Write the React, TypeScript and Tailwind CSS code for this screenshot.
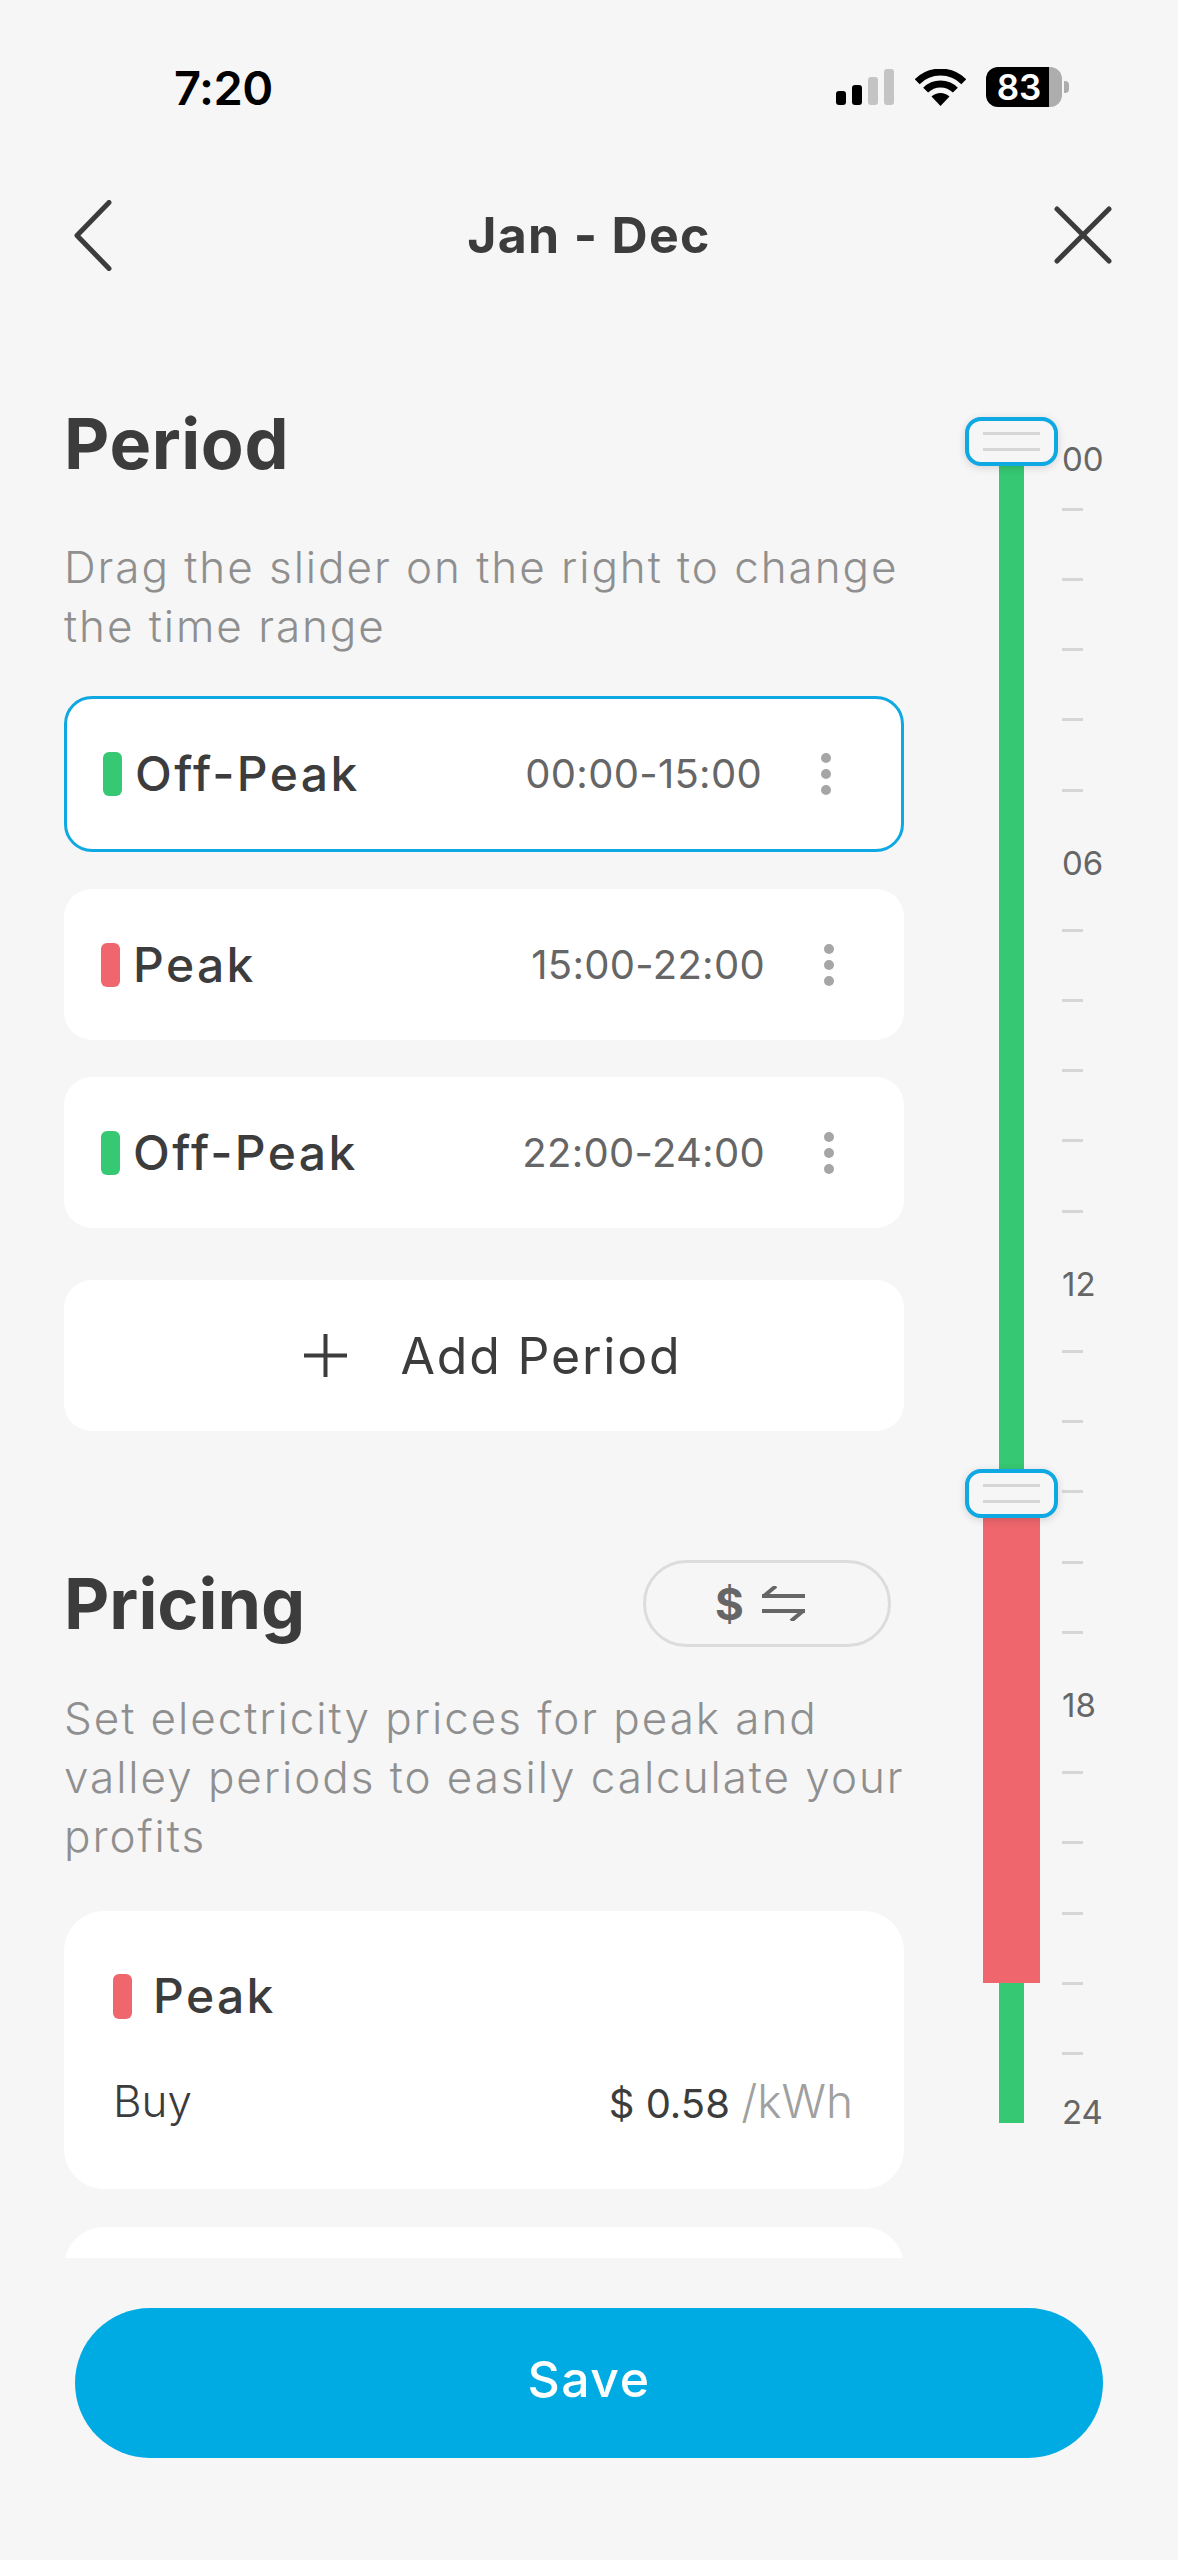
const ticks = Array.from({ length: 25 }, (_, hour) => hour);

const periods = [
  { name: "Off-Peak", range: "00:00-15:00", color: "bg-[#36c873]", active: true },
  { name: "Peak", range: "15:00-22:00", color: "bg-[#ef666d]", active: false },
  { name: "Off-Peak", range: "22:00-24:00", color: "bg-[#36c873]", active: false },
];

function StatusBar() {
  return (
    <div className="flex h-[174px] items-center justify-between pl-[174px] pr-[109px]">
      <span className="text-[47px] font-semibold leading-none tracking-[-0.5px] text-black">7:20</span>
      <div className="flex items-center">
        {/* Signal */}
        <div className="flex h-[36px] items-end gap-[6px]">
          <div className="h-[14px] w-[10px] rounded-[3px] bg-black" />
          <div className="h-[20px] w-[10px] rounded-[3px] bg-black" />
          <div className="h-[28px] w-[10px] rounded-[3px] bg-[#c4c4c4]" />
          <div className="h-[36px] w-[10px] rounded-[3px] bg-[#c4c4c4]" />
        </div>
        {/* Wifi */}
        <svg className="ml-[21px]" width="51" height="37" viewBox="0 0 51 37" fill="none">
          <path d="M2.2 12.7A33 33 0 0 1 48.8 12.7" stroke="#000" strokeWidth="7" />
          <path d="M10.65 21.15A21 21 0 0 1 40.35 21.15" stroke="#000" strokeWidth="7" />
          <path d="M25.5 37L16.5 27.5A13 13 0 0 1 34.5 27.5Z" fill="#000" />
        </svg>
        {/* Battery */}
        <div className="ml-[20px] flex h-[40px] w-[76px]">
          <div className="flex w-[63px] items-center justify-center rounded-l-[12px] bg-black pl-[3px] text-[35px] font-semibold leading-none text-white">
            83
          </div>
          <div className="w-[13px] rounded-r-[12px] bg-[#adadad]" />
        </div>
        <div className="ml-[2px] h-[12px] w-[5px] rounded-r-[4px] bg-[#adadad]" />
      </div>
    </div>
  );
}

function Header() {
  return (
    <div className="grid h-[122px] grid-cols-[1fr_auto_1fr] items-center px-[66px]">
      <svg className="ml-[8px]" width="38" height="71" viewBox="0 0 38 71" fill="none">
        <path d="M35 2.5L3 35.5L35 68.5" stroke="#3c3c3c" strokeWidth="5" strokeLinecap="round" strokeLinejoin="round" />
      </svg>
      <h1 className="text-[50px] font-bold leading-none tracking-[1.3px] text-[#3c3c3c]">Jan - Dec</h1>
      <svg className="justify-self-end" width="58" height="58" viewBox="0 0 58 58" fill="none">
        <path d="M3 3L55 55M55 3L3 55" stroke="#3c3c3c" strokeWidth="5" strokeLinecap="round" />
      </svg>
    </div>
  );
}

function PeriodRow({ name, range, color, active }: { name: string; range: string; color: string; active: boolean }) {
  return (
    <div
      className={`flex items-center rounded-[28px] bg-white pr-[70px] ${
        active ? "h-[156px] border-[3px] border-[#0ea8e2] pl-[36px]" : "h-[151px] pl-[37px]"
      }`}
    >
      <div className={`h-[44px] w-[19px] rounded-[6px] ${color}`} />
      <span className="ml-[13px] text-[48px] font-medium leading-none tracking-[2.4px] text-[#3c3c3c]">{name}</span>
      <span className="ml-auto text-[40px] leading-none tracking-[0.3px] text-[#666]">{range}</span>
      <div className="ml-[59px] flex flex-col gap-[6px]">
        <div className="size-[10px] rounded-full bg-[#a6a6a6]" />
        <div className="size-[10px] rounded-full bg-[#a6a6a6]" />
        <div className="size-[10px] rounded-full bg-[#a6a6a6]" />
      </div>
    </div>
  );
}

function Handle({ top }: { top: string }) {
  return (
    <div
      className={`absolute left-0 flex h-[49px] w-[93px] flex-col items-center justify-center gap-[13px] rounded-[16px] border-[4px] border-[#0ea8e2] bg-[#f6f6f6] shadow-[0_2px_8px_rgba(0,0,0,0.14)] ${top}`}
    >
      <div className="h-[3px] w-[57px] bg-[#d6d6d6]" />
      <div className="h-[3px] w-[57px] bg-[#d6d6d6]" />
    </div>
  );
}

function Slider() {
  return (
    <div className="ml-[61px] flex items-start pt-[108px]">
      <div className="relative mt-[35px] w-[93px]">
        <div className="flex flex-col items-center">
          <div className="h-[1053px] w-[25px] bg-[#36c873]" />
          <div className="h-[491px] w-[57px] bg-[#ef666d]" />
          <div className="h-[140px] w-[25px] bg-[#36c873]" />
        </div>
        <Handle top="top-[-22px]" />
        <Handle top="top-[1030px]" />
      </div>
      <div className="ml-[4px] flex flex-col">
        {ticks.map((hour) => {
          const label = hour % 6 === 0;
          return (
            <div
              key={hour}
              className={`flex h-[70.2px] items-center ${
                hour === 0 ? "pt-[40px]" : hour === 24 ? "pb-[22px]" : label ? "pt-[6px]" : ""
              }`}
            >
              {label ? (
                <span className="text-[33px] leading-none text-[#666]">{String(hour).padStart(2, "0")}</span>
              ) : (
                <div className="h-[3px] w-[21px] bg-[#d6d6d6]" />
              )}
            </div>
          );
        })}
      </div>
    </div>
  );
}

export default function App() {
  return (
    <div className="flex h-[2560px] w-[1178px] flex-col overflow-hidden bg-[#f6f6f6] font-[Inter,sans-serif]">
      <StatusBar />
      <Header />

      <div className="flex h-[1962px] overflow-hidden">
        <div className="ml-[64px] w-[840px] shrink-0 pt-[108px]">
          {/* Period */}
          <h2 className="text-[70px] font-bold leading-[80px] tracking-[0.6px] text-[#3c3c3c]">Period</h2>
          <p className="mt-[54px] text-[44px] font-light leading-[59px] tracking-[1.95px] whitespace-nowrap text-[#8f8f8f]">
            Drag the slider on the right to change
            <br />
            the time range
          </p>
          <div className="mt-[40px] flex flex-col gap-[37px]">
            {periods.map((period, i) => (
              <PeriodRow key={i} {...period} />
            ))}
          </div>
          <div className="mt-[52px] flex h-[151px] items-center justify-center gap-[53px] rounded-[28px] bg-white pl-[16px]">
            <svg width="45" height="45" viewBox="0 0 45 45" fill="none">
              <path d="M22.5 1V44M1 22.5H44" stroke="#3c3c3c" strokeWidth="4" />
            </svg>
            <span className="text-[50px] leading-none tracking-[1.8px] text-[#3c3c3c]">Add Period</span>
          </div>

          {/* Pricing */}
          <div className="mt-[129px] flex h-[87px] items-center justify-between pr-[13px]">
            <h2 className="text-[70px] font-bold leading-[80px] text-[#3c3c3c]">Pricing</h2>
            <div className="flex h-[87px] w-[248px] items-center justify-center gap-[18px] rounded-full border-[3px] border-[#dcdcdc] pr-[14px]">
              <span className="text-[44px] font-bold leading-none text-[#666]">$</span>
              <svg width="43" height="35" viewBox="0 0 43 35" fill="none">
                <path d="M0 10H43M2 10L14 0M0 25H43M41 25L29 35" stroke="#666" strokeWidth="4" />
              </svg>
            </div>
          </div>
          <p className="mt-[42px] text-[44px] font-light leading-[59px] tracking-[1.95px] whitespace-nowrap text-[#8f8f8f]">
            Set electricity prices for peak and
            <br />
            valley periods to easily calculate your
            <br />
            profits
          </p>
          <div className="mt-[45px] h-[278px] rounded-[40px] bg-white pl-[49px] pr-[51px] pt-[61px]">
            <div className="flex items-center">
              <div className="h-[45px] w-[19px] rounded-[6px] bg-[#ef666d]" />
              <span className="ml-[21px] text-[48px] font-medium leading-none tracking-[2.4px] text-[#3c3c3c]">Peak</span>
            </div>
            <div className="mt-[58px] flex items-center justify-between">
              <span className="text-[44px] font-light leading-none text-[#3c3c3c]">Buy</span>
              <span className="text-[40px] leading-none text-[#3c3c3c]">
                $ 0.58 <span className="text-[46px] font-light text-[#a0a0a0]">/kWh</span>
              </span>
            </div>
          </div>
          <div className="mt-[38px] h-[278px] rounded-[40px] bg-white" />
        </div>
        <Slider />
      </div>

      <button className="mx-[75px] mt-[50px] h-[150px] shrink-0 rounded-full bg-[#00aae3] pb-[8px] text-[50px] font-medium tracking-[1.5px] text-white">
        Save
      </button>
    </div>
  );
}
